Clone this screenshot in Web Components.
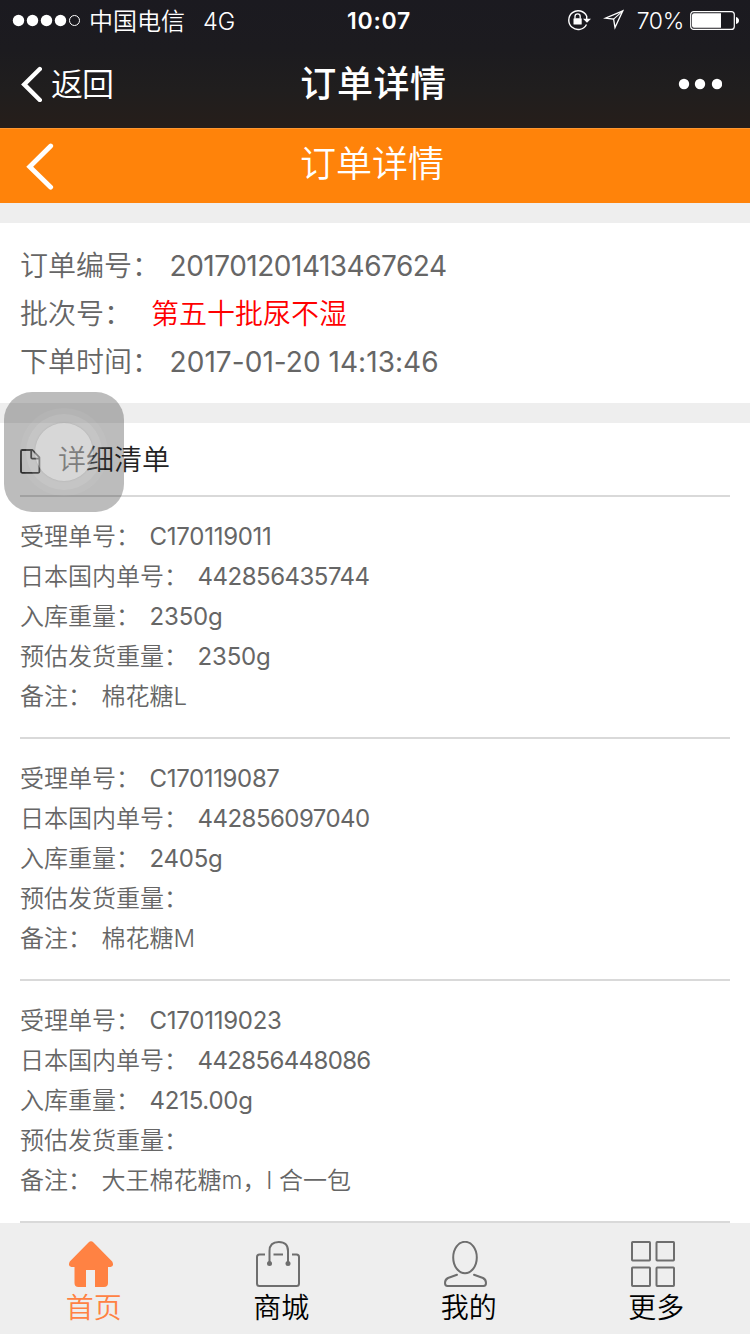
<!DOCTYPE html>
<html lang="zh-CN">
<head>
<meta charset="utf-8">
<title>订单详情</title>
<style>
  html, body {
    margin: 0;
    height: 100%;
    overflow: hidden;
    background: #fff;
    font-family: Inter, "Noto Sans CJK SC", sans-serif;
    font-weight: 350;
  }
</style>
</head>
<body>
<order-page>
  <phone-header slot="top" carrier="中国电信" network="4G" time="10:07" battery="70%" heading="订单详情"></phone-header>
  <page-title slot="top">订单详情</page-title>

  <order-summary>
    <order-field label="订单编号：" fit="277">201701201413467624</order-field>
    <order-field label="批次号：" style="--gap:19px;--value:#f00">第五十批尿不湿</order-field>
    <order-field label="下单时间：" fit="269">2017-01-20 14:13:46</order-field>
  </order-summary>

  <detail-list heading="详细清单">
    <detail-item>
      <order-field label="受理单号：" fit="122">C170119011</order-field>
      <order-field label="日本国内单号：" fit="172">442856435744</order-field>
      <order-field label="入库重量：" fit="73">2350g</order-field>
      <order-field label="预估发货重量：" fit="73">2350g</order-field>
      <order-field label="备注：">棉花糖L</order-field>
    </detail-item>
    <detail-item>
      <order-field label="受理单号：" fit="130">C170119087</order-field>
      <order-field label="日本国内单号：" fit="172">442856097040</order-field>
      <order-field label="入库重量：" fit="73">2405g</order-field>
      <order-field label="预估发货重量："></order-field>
      <order-field label="备注：">棉花糖M</order-field>
    </detail-item>
    <detail-item>
      <order-field label="受理单号：" fit="132">C170119023</order-field>
      <order-field label="日本国内单号：" fit="173">442856448086</order-field>
      <order-field label="入库重量：" fit="103">4215.00g</order-field>
      <order-field label="预估发货重量："></order-field>
      <order-field label="备注：">大王棉花糖m，l 合一包</order-field>
    </detail-item>
  </detail-list>

  <tab-bar slot="bottom">
    <tab-item icon="home" active>首页</tab-item>
    <tab-item icon="bag">商城</tab-item>
    <tab-item icon="user">我的</tab-item>
    <tab-item icon="more">更多</tab-item>
  </tab-bar>
  <assistive-touch slot="overlay"></assistive-touch>
</order-page>

<script>
// small base class: each element only gives its html
class BaseElement extends HTMLElement {
  constructor() {
    super();
    this.attachShadow({ mode: "open" });
  }
  connectedCallback() {
    this.shadowRoot.innerHTML = this.render();
  }
  attr(name) {
    return this.getAttribute(name) || "";
  }
}

class OrderPage extends BaseElement {
  render() {
    return /*html*/`
      <style>
        :host { display: flex; flex-direction: column; height: 1334px; position: relative; }
        main { flex: 1; min-height: 0; overflow: hidden; background: #eee; padding-top: 20px;
               display: flex; flex-direction: column; gap: 20px; }
      </style>
      <slot name="top"></slot>
      <main><slot></slot></main>
      <slot name="bottom"></slot>
      <slot name="overlay"></slot>`;
  }
}

class PhoneHeader extends BaseElement {
  render() {
    return /*html*/`
      <style>
        :host { display: block; height: 128px; color: #fff;
                background: linear-gradient(#1b1a20 0, #1c1b1f 50px, #201e1e 90px, #261e1a 127px); }
        .status, .nav { display: grid; grid-template-columns: 1fr auto 1fr; align-items: center; }
        .status { height: 40px; font-size: 24px; padding: 0 11px 0 12px; }
        .nav { height: 88px; padding: 0 28px 0 21px; }
        .left, .right { display: flex; align-items: center; }
        .right { justify-content: flex-end; }
        svg { display: block; flex: none; }
        .carrier { margin-left: 8px; margin-bottom: 2px; }
        .network { margin: 2px 0 0 18px; font-size: 23.5px; }
        .time { font-size: 23px; font-weight: 600; letter-spacing: .8px; margin: 2px 0 0 7px; }
        .battery { font-size: 23px; margin: 2px 6px 0 13px; letter-spacing: -.3px; }
        .lock { margin-right: 1px; }
        .arrow { margin-left: 11px; }
        .back { font-size: 32px; margin: 0 0 4px 9px; letter-spacing: -1px; }
        h1 { margin: 0 0 6px 4px; font-size: 36px; font-weight: 500; letter-spacing: .6px; }
      </style>
      <div class="status">
        <div class="left">
          <svg width="69" height="14" viewBox="0 0 69 14" fill="#fff">
            <circle cx="6.5" cy="7.5" r="5.7"/><circle cx="20.5" cy="7.5" r="5.7"/>
            <circle cx="34.5" cy="7.5" r="5.7"/><circle cx="48.5" cy="7.5" r="5.7"/>
            <circle cx="62.5" cy="7.5" r="5" fill="none" stroke="#fff"/>
          </svg>
          <span class="carrier">${this.attr("carrier")}</span>
          <span class="network">${this.attr("network")}</span>
        </div>
        <span class="time">${this.attr("time")}</span>
        <div class="right">
          <svg class="lock" width="24" height="22" viewBox="0 0 24 22">
            <path d="M19.5 15.5A9.4 9.4 0 1 1 19.7 7.2" fill="none" stroke="#fff" stroke-width="1.4"/>
            <path d="M19.7 7v4" stroke="#fff" stroke-width="1.4"/>
            <path d="M16 9.8h8l-4 4z" fill="#fff"/>
            <rect x="6.5" y="9.3" width="8.2" height="6.3" rx=".6" fill="#fff"/>
            <path d="M8 9.5V7.4a2.6 2.6 0 0 1 5.2 0v2.1" fill="none" stroke="#fff" stroke-width="1.3"/>
          </svg>
          <svg class="arrow" width="21" height="22" viewBox="0 0 21 22">
            <path d="M19.8 1.8L2.4 9.2 10.6 10.2 12 18.6z" fill="none" stroke="#fff" stroke-width="1.3"/>
            <path d="M10.6 10.2l9.2-8.4" stroke="#fff" stroke-width="1.1"/>
          </svg>
          <span class="battery">${this.attr("battery")}</span>
          <svg width="49" height="20" viewBox="0 0 49 20">
            <rect x=".7" y="1.6" width="43.6" height="17.8" rx="3" fill="none" stroke="#fff" stroke-width="1.2"/>
            <path d="M4 3.2h27v14.6H4a2 2 0 0 1-2-2V5.2a2 2 0 0 1 2-2z" fill="#fff"/>
            <path d="M46 7q3 1 3 3.5t-3 3.5z" fill="#fff"/>
          </svg>
        </div>
      </div>
      <div class="nav">
        <div class="left">
          <svg width="21" height="36" viewBox="0 0 21 36">
            <path d="M18.8 3L3.2 18.4 18.8 34" fill="none" stroke="#fff" stroke-width="4.4" stroke-linecap="round"/>
          </svg>
          <span class="back">返回</span>
        </div>
        <h1>${this.attr("heading")}</h1>
        <div class="right">
          <svg width="44" height="12" viewBox="0 0 44 12" fill="#fff">
            <circle cx="6" cy="6" r="5.2"/><circle cx="22" cy="6" r="5.2"/><circle cx="39" cy="6" r="5.2"/>
          </svg>
        </div>
      </div>`;
  }
}

class PageTitle extends BaseElement {
  render() {
    return /*html*/`
      <style>
        :host { display: grid; grid-template-columns: 27px 1fr 33px; align-items: center;
                height: 75px; padding: 0 26px; box-sizing: border-box;
                background: #ff830a; border-top: 1px solid #ff962f; color: #fff; }
        svg { display: block; }
        span { text-align: center; font-size: 36px; line-height: 68px; margin-bottom: 5px; }
      </style>
      <svg width="28" height="48" viewBox="0 0 28 48">
        <path d="M24.7 4L3.7 24.8 24.7 45.2" fill="none" stroke="#fff" stroke-width="4.8" stroke-linecap="round"/>
      </svg>
      <span><slot></slot></span>`;
  }
}

class OrderSummary extends BaseElement {
  render() {
    return /*html*/`
      <style>
        :host { display: block; flex: none; background: #fff; color: #666; padding: 19px 20px 17px;
                font-size: 28px; line-height: 48px; --row: 48px; }
      </style>
      <slot></slot>`;
  }
}

class OrderField extends BaseElement {
  connectedCallback() {
    super.connectedCallback();
    const width = parseFloat(this.getAttribute("fit"));
    if (width) {
      const value = this.shadowRoot.querySelector(".value");
      const extra = width - value.getBoundingClientRect().width;
      value.style.letterSpacing = extra / this.textContent.length + "px";
    }
  }
  render() {
    return /*html*/`
      <style>
        :host { display: flex; gap: var(--gap, 9.6px); height: var(--row); white-space: nowrap; }
        .value { color: var(--value, inherit); }
        :host([fit]) .value { font-weight: 400; }
      </style>
      <span>${this.attr("label")}</span><span class="value"><slot></slot></span>`;
  }
}

class DetailList extends BaseElement {
  render() {
    return /*html*/`
      <style>
        :host { display: block; flex: none; background: #fff; padding: 0 20px; }
        header { display: flex; align-items: center; height: 72px; border-bottom: 2px solid #d9d9d9;
                 font-size: 28px; color: #222; }
        svg { margin: 4px 17px 0 0; }
        span { margin-bottom: 2px; }
      </style>
      <header>
        <svg width="21" height="25" viewBox="0 0 21 25" fill="none" stroke="#333" stroke-width="1.8" stroke-linejoin="round">
          <path d="M1 2.2Q1 1 2.2 1H12.5L19.4 8.4V22.6Q19.4 23.8 18.2 23.8H2.2Q1 23.8 1 22.6Z"/>
          <path d="M11.2 1V8.4Q11.2 9.6 12.4 9.6H19.4"/>
        </svg>
        <span>${this.attr("heading")}</span>
      </header>
      <slot></slot>`;
  }
}

class DetailItem extends BaseElement {
  render() {
    return /*html*/`
      <style>
        :host { display: block; padding: 20px 0; border-bottom: 2px solid #d9d9d9; color: #666;
                font-size: 24px; line-height: 40px; --row: 40px; }
      </style>
      <slot></slot>`;
  }
}

class TabBar extends BaseElement {
  render() {
    return /*html*/`
      <style>
        :host { display: grid; grid-template-columns: repeat(4, 1fr); height: 111px; background: #eee; }
      </style>
      <slot></slot>`;
  }
}

const icons = {
  home: `<path d="M19.5 1.5Q22 -1 24.5 1.5L43.2 20.5Q45.5 25.5 41.5 26H39V42Q39 46 35 46H26V29H17V46H9.5Q5.5 46 5.5 42V26H2.5Q-1.5 25.5 .8 20.5Z" fill="#ff8243"/>`,
  bag: `<g fill="none" stroke="#6e6e6e" stroke-width="2">
      <path d="M9 13.5H3.5Q1 13.5 1 16V42.5Q1 45 3.5 45H40.5Q43 45 43 42.5V16Q43 13.5 40.5 13.5H36M17.5 13.5H27"/>
      <path d="M13.5 22V10Q13.5 1 22.8 1T32 10V22"/>
    </g><circle cx="13.5" cy="22.5" r="2.5" fill="#6e6e6e"/><circle cx="32" cy="22.5" r="2.5" fill="#6e6e6e"/>`,
  user: `<g fill="none" stroke="#6e6e6e" stroke-width="2" stroke-linecap="round">
      <ellipse cx="21" cy="16.5" rx="11.8" ry="15.7"/>
      <path d="M13 33.8L4 37Q1 38.5 1 42Q1 45 3.5 45H39.5Q42 45 42 42Q42 38.5 39 37L30 33.8"/>
    </g>`,
  more: `<g fill="none" stroke="#6e6e6e" stroke-width="2">
      <rect x="1" y="1" width="18" height="18.5" rx=".7"/><rect x="25.5" y="1" width="17.5" height="18.5" rx=".7"/>
      <rect x="1" y="26.5" width="18" height="18.5" rx=".7"/><rect x="25.5" y="26.5" width="17.5" height="18.5" rx=".7"/>
    </g>`
};

class TabItem extends BaseElement {
  render() {
    return /*html*/`
      <style>
        :host { display: flex; flex-direction: column; align-items: center; padding-top: 18px;
                font-size: 28px; color: #000; }
        :host([active]) { color: #ff8243; }
        svg { display: block; margin-right: 6px; }
        span { line-height: 42px; }
      </style>
      <svg width="44" height="46" viewBox="0 0 44 46">${icons[this.attr("icon")]}</svg>
      <span><slot></slot></span>`;
  }
}

class AssistiveTouch extends BaseElement {
  render() {
    return /*html*/`
      <style>
        :host { position: absolute; left: 4px; top: 392px; width: 120px; height: 120px;
                border-radius: 28px; background: rgba(33, 33, 33, .3);
                display: grid; place-items: center; }
        div { display: grid; place-items: center; border-radius: 50%; }
        .outer { width: 88px; height: 88px; background: rgba(255, 255, 255, .05); }
        .middle { width: 76px; height: 76px; background: rgba(255, 255, 255, .1); }
        .inner { width: 58px; height: 58px; background: rgba(255, 255, 255, .32);
                 box-shadow: 0 0 2px rgba(0, 0, 0, .12); }
      </style>
      <div class="outer"><div class="middle"><div class="inner"></div></div></div>`;
  }
}

customElements.define("order-page", OrderPage);
customElements.define("phone-header", PhoneHeader);
customElements.define("page-title", PageTitle);
customElements.define("order-summary", OrderSummary);
customElements.define("detail-list", DetailList);
customElements.define("detail-item", DetailItem);
customElements.define("order-field", OrderField);
customElements.define("tab-bar", TabBar);
customElements.define("tab-item", TabItem);
customElements.define("assistive-touch", AssistiveTouch);
</script>
</body>
</html>
